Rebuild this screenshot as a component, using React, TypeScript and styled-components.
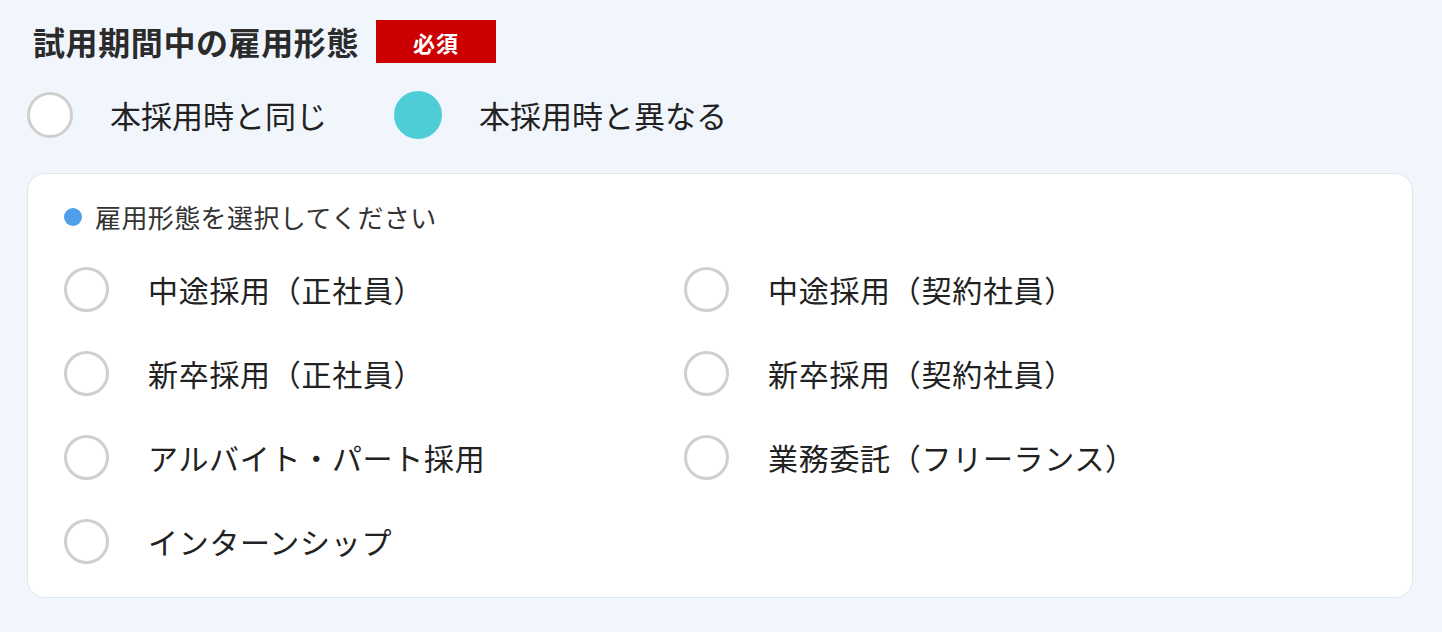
import React, { useState } from "react";
import styled, { createGlobalStyle } from "styled-components";

const GlobalStyle = createGlobalStyle`
  html, body {
    margin: 0;
    padding: 0;
    background: #f1f6fd;
  }
  body {
    font-family: "Noto Sans CJK JP", "Noto Sans", sans-serif;
    color: #222;
  }
`;

const Page = styled.div`
  width: 1442px;
  height: 632px;
  box-sizing: border-box;
  padding: 20px 30px 0 27px;
  background: #f1f6fd;
  display: flex;
  flex-direction: column;
`;

const Header = styled.div`
  display: flex;
  align-items: center;
  gap: 17px;
  height: 43px;
  margin-left: 6px;
`;

const Title = styled.h2`
  margin: 0;
  font-size: 32px;
  font-weight: 700;
  color: #2b2b2b;
  line-height: 43px;
  letter-spacing: 0.6px;
`;

const Badge = styled.span`
  display: inline-flex;
  align-items: center;
  justify-content: center;
  width: 120px;
  height: 43px;
  background: #cc0000;
  color: #fff;
  font-size: 22px;
  font-weight: 700;
  letter-spacing: 1px;
`;

const ModeRow = styled.div`
  display: flex;
  align-items: center;
  margin-top: 29px;
  height: 46px;
  gap: 67px;
`;

const Choice = styled.label<{ $gap: number }>`
  display: flex;
  align-items: center;
  gap: ${(p) => p.$gap}px;
  cursor: pointer;
`;

const Circle = styled.span<{ $checked: boolean; $size: number }>`
  display: block;
  flex: none;
  box-sizing: border-box;
  width: ${(p) => p.$size}px;
  height: ${(p) => p.$size}px;
  border-radius: 50%;
  border: 3px solid ${(p) => (p.$checked ? "#4fcdd6" : "#cfcfcf")};
  background: ${(p) => (p.$checked ? "#4fcdd6" : "#ffffff")};
`;

const ChoiceText = styled.span<{ $size: number; $spacing: number }>`
  font-size: ${(p) => p.$size}px;
  letter-spacing: ${(p) => p.$spacing}px;
  line-height: 1.2;
  color: #222;
  white-space: nowrap;
`;

const Card = styled.section`
  margin-top: 35px;
  width: 1386px;
  box-sizing: border-box;
  background: #ffffff;
  border: 1px solid #e1e6ed;
  border-radius: 18px;
  padding: 24px 36px 14px;
`;

const Hint = styled.div`
  display: flex;
  align-items: center;
  height: 38px;
  gap: 13px;
`;

const Dot = styled.span`
  display: block;
  width: 18px;
  height: 18px;
  border-radius: 50%;
  background: #4f9fe9;
`;

const HintText = styled.span`
  font-size: 26px;
  letter-spacing: 0.4px;
  color: #333;
  line-height: 1;
`;

const Grid = styled.div`
  margin-top: 11px;
  display: grid;
  grid-template-columns: 620px 620px;
  grid-auto-rows: 84px;
`;

const Cell = styled.div`
  display: flex;
  align-items: center;
`;

const modes = ["本採用時と同じ", "本採用時と異なる"];
const options = [
  "中途採用（正社員）",
  "中途採用（契約社員）",
  "新卒採用（正社員）",
  "新卒採用（契約社員）",
  "アルバイト・パート採用",
  "業務委託（フリーランス）",
  "インターンシップ",
];

export default function App() {
  const [mode, setMode] = useState(1);
  const [type, setType] = useState<number | null>(null);
  return (
    <>
      <GlobalStyle />
      <Page>
        <Header>
          <Title>試用期間中の雇用形態</Title>
          <Badge>必須</Badge>
        </Header>
        <ModeRow>
          {modes.map((m, i) => (
            <Choice key={m} $gap={37} onClick={() => setMode(i)}>
              <Circle $checked={mode === i} $size={mode === i ? 48 : 46} />
              <ChoiceText $size={31} $spacing={0}>
                {m}
              </ChoiceText>
            </Choice>
          ))}
        </ModeRow>
        <Card>
          <Hint>
            <Dot />
            <HintText>雇用形態を選択してください</HintText>
          </Hint>
          <Grid>
            {options.map((o, i) => (
              <Cell key={o}>
                <Choice $gap={39} onClick={() => setType(i)}>
                  <Circle $checked={type === i} $size={45} />
                  <ChoiceText $size={30} $spacing={0.7}>
                    {o}
                  </ChoiceText>
                </Choice>
              </Cell>
            ))}
          </Grid>
        </Card>
      </Page>
    </>
  );
}
